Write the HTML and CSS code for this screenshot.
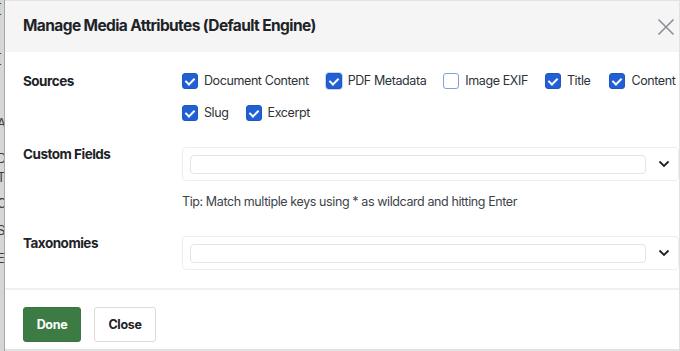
FILE: index.html
```html
<!DOCTYPE html>
<html lang="en">
<head>
	<meta charset="UTF-8">
	<title>Manage Media Attributes</title>
	<link rel="stylesheet" href="styles.css">
</head>
<body>
	<div class="page">
		<!-- page behind the dialog -->
		<div class="behind">
			<span class="b1">[</span>
			<span class="b2">[</span>
			<span class="b3">A</span>
			<span class="b4">D</span>
			<span class="b5">T</span>
			<span class="b6">C</span>
			<span class="b7">S</span>
			<span class="b8">E</span>
		</div>

		<div class="modal">
			<div class="modal-header">
				<h2 class="modal-title">Manage Media Attributes (Default Engine)</h2>
				<a href="javascript:void(0);" class="modal-close">
					<svg width="18" height="18" viewBox="0 0 18 18"><path d="M1.5 1.5L16.5 16.5M16.5 1.5L1.5 16.5" stroke="#8c8f94" stroke-width="1.6" fill="none"/></svg>
				</a>
			</div>

			<div class="modal-body">
				<div class="field-row">
					<label class="field-label">Sources</label>
					<div class="field-control sources">
						<div class="check-line">
							<label class="check"><span class="box checked"></span>Document Content</label>
							<label class="check"><span class="box checked focus"></span>PDF Metadata</label>
							<label class="check"><span class="box"></span>Image EXIF</label>
							<label class="check"><span class="box checked"></span>Title</label>
							<label class="check"><span class="box checked"></span>Content</label>
						</div>
						<div class="check-line">
							<label class="check"><span class="box checked"></span>Slug</label>
							<label class="check"><span class="box checked"></span>Excerpt</label>
						</div>
					</div>
				</div>

				<div class="field-row">
					<label class="field-label">Custom Fields</label>
					<div class="field-control">
						<div class="select">
							<div class="select-input"></div>
							<span class="select-arrow">
								<svg width="12" height="8" viewBox="0 0 12 8"><path d="M1.5 1.5L6 6L10.5 1.5" stroke="#1d2327" stroke-width="1.8" fill="none"/></svg>
							</span>
						</div>
						<p class="tip">Tip: Match multiple keys using * as wildcard and hitting Enter</p>
					</div>
				</div>

				<div class="field-row">
					<label class="field-label">Taxonomies</label>
					<div class="field-control">
						<div class="select">
							<div class="select-input"></div>
							<span class="select-arrow">
								<svg width="12" height="8" viewBox="0 0 12 8"><path d="M1.5 1.5L6 6L10.5 1.5" stroke="#1d2327" stroke-width="1.8" fill="none"/></svg>
							</span>
						</div>
					</div>
				</div>
			</div>

			<div class="modal-footer">
				<a href="javascript:void(0);" class="btn btn-done">Done</a>
				<a href="javascript:void(0);" class="btn btn-close">Close</a>
			</div>
		</div>
	</div>
</body>
</html>
```

FILE: styles.css
```css
html, body, div, p, h2, span, a, label {
    margin: 0px;
    padding: 0px;
}
body {
    font-family: Inter, "Noto Sans", sans-serif;
    color: #1d2327;
    background: #ffffff;
}
a {
    text-decoration: none;
    color: #1d2327;
}
.page {
    display: flex;
    width: 680px;
    height: 351px;
    overflow: hidden;
}
.behind {
    width: 4px;
    flex: none;
    position: relative;
    background: #d6d6d6;
    border-right: 1px solid #a7a7a7;
    overflow: hidden;
    font-size: 13px;
    line-height: 16px;
    color: #3c3c3c;
}
.behind span {
    position: absolute;
    left: -3px;
}
.behind .b1 { top: 0px; }
.behind .b2 { top: 50px; }
.behind .b3 { top: 115px; }
.behind .b4 { top: 150px; }
.behind .b5 { top: 169px; }
.behind .b6 { top: 195px; }
.behind .b7 { top: 222px; }
.behind .b8 { top: 250px; }
.modal {
    flex: 1;
    min-width: 0;
    display: flex;
    flex-direction: column;
    background: #ffffff;
    border-top: 1px solid #e2e2e2;
    border-bottom: 2px solid #e2e2e2;
    border-right: 1px solid #e2e2e2;
    overflow: hidden;
}
.modal-header {
    height: 51px;
    flex: none;
    display: flex;
    align-items: center;
    justify-content: space-between;
    padding: 0px 2px 0px 18px;
    background: #f5f5f5;
}
.modal-title {
    font-size: 15.5px;
    letter-spacing: -0.6px;
    font-weight: 700;
    color: #1d2327;
    margin-top: -2px;
}
.modal-close {
    display: flex;
    width: 22px;
    height: 22px;
    align-items: center;
    justify-content: center;
}
.modal-body {
    flex: 1;
    padding: 21px 0px 0px 18px;
    border-bottom: 2px solid #f0f0f0;
}
.field-row {
    display: flex;
    margin-bottom: 26px;
}
.field-label {
    width: 159px;
    flex: none;
    font-size: 13.5px;
    letter-spacing: -0.5px;
    font-weight: 700;
    line-height: 16px;
}
.field-row:nth-child(2) .field-label,
.field-row:nth-child(3) .field-label {
    margin-top: -1px;
}
.field-control {
    flex: 1;
    min-width: 0;
}
.sources {
    display: flex;
    flex-direction: column;
    gap: 16px;
}
.check-line {
    display: flex;
    white-space: nowrap;
}
.check {
    display: flex;
    align-items: center;
    font-size: 12.5px;
    letter-spacing: -0.4px;
    line-height: 16px;
    color: #2c3338;
    margin-right: 17px;
}
.check:nth-child(4) {
    margin-right: 19px;
}
.check .box {
    width: 14px;
    height: 14px;
    flex: none;
    border: 1px solid #7fa0e0;
    border-radius: 3px;
    background: #ffffff;
    margin-right: 6px;
    position: relative;
}
.check .box.checked {
    background: #2160d4;
    border-color: #1f56c0;
}
.check .box.checked::after {
    content: "";
    position: absolute;
    left: 4px;
    top: 2px;
    width: 4px;
    height: 7px;
    border-right: 2px solid #ffffff;
    border-bottom: 2px solid #ffffff;
    transform: rotate(45deg);
}
.check .box.focus {
    box-shadow: 0px 0px 0px 1px #c6d6f5;
}
.select {
    display: flex;
    align-items: center;
    height: 32px;
    border: 1px solid #ededed;
    border-radius: 4px;
    padding: 0px 0px 0px 7px;
}
.select-input {
    width: 454px;
    height: 17px;
    flex: none;
    border: 1px solid #e4e4e4;
    border-radius: 4px;
}
.select-arrow {
    display: flex;
    align-items: center;
    justify-content: center;
    width: 30px;
    margin-left: 3px;
}
.tip {
    font-size: 12.5px;
    letter-spacing: -0.4px;
    line-height: 16px;
    color: #3c434a;
    margin-top: 13px;
}
.field-row:last-child {
    margin-bottom: 18px;
}
.modal-footer {
    flex: none;
    display: flex;
    align-items: center;
    gap: 13px;
    padding: 17px 18px 7px 18px;
}
.btn {
    display: flex;
    align-items: center;
    justify-content: center;
    height: 33px;
    font-size: 12.5px;
    letter-spacing: -0.3px;
    font-weight: 700;
    border-radius: 3px;
    border: 1px solid #dcdcde;
}
.btn-done {
    width: 56px;
    background: #3d7b45;
    border-color: #3a7442;
    color: #ffffff;
}
.btn-close {
    width: 60px;
    background: #ffffff;
    color: #1d2327;
}
```
